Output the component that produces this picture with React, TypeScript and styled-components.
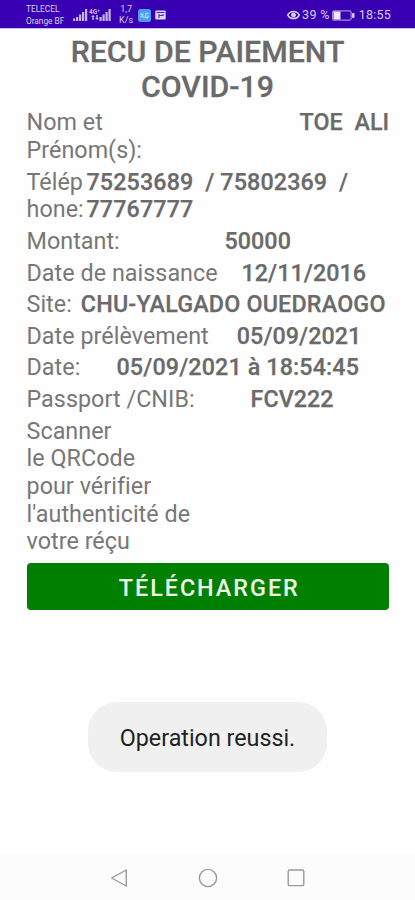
import React from "react";
import styled, { createGlobalStyle } from "styled-components";

const GlobalStyle = createGlobalStyle`
  * { box-sizing: border-box; }
  html, body { margin: 0; background: #fefefe; }
  body { font-family: Roboto, sans-serif; }
`;

const Screen = styled.div`
  width: 415px;
  height: 900px;
  display: flex;
  flex-direction: column;
  overflow: hidden;
  background: #fefefe;
`;

const StatusBar = styled.header`
  flex: none;
  height: 29px;
  padding: 0 24px 0 26px;
  display: flex;
  justify-content: space-between;
  align-items: center;
  background: #3900b3;
  border-bottom: 1px solid #c9baf0;
  color: #d8cdf5;
`;

const StatusGroup = styled.div<{ $gap: number }>`
  display: flex;
  align-items: center;
  gap: ${(p) => p.$gap}px;
  padding-top: 2px;
`;

const SignalGroup = styled.div`
  display: flex;
  align-items: center;
  gap: 1px;
`;

const Carrier = styled.div`
  width: 43px;
  font-size: 8.4px;
  line-height: 12px;
  letter-spacing: -0.05px;
  white-space: nowrap;
`;

const Speed = styled.div`
  width: 15px;
  margin-left: 2px;
  font-size: 9px;
  line-height: 11px;
  text-align: center;
`;

const StatusText = styled.span<{ $spacing?: number }>`
  font-size: 12.5px;
  line-height: 16px;
  letter-spacing: ${(p) => p.$spacing ?? 0}px;
  white-space: nowrap;
`;

const Title = styled.h1`
  flex: none;
  margin: 4.5px 0 0;
  font-size: 30.3px;
  line-height: 35.6px;
  font-weight: 500;
  text-align: center;
  color: #6a6a6a;
  -webkit-text-stroke: 0.3px #6a6a6a;
`;

const Receipt = styled.main`
  flex: none;
  padding: 4.8px 26px 0 26.5px;
  display: flex;
  flex-direction: column;
  gap: 3.9px;
  font-size: 23.3px;
  line-height: 27.7px;
`;

const Row = styled.div`
  display: flex;
  align-items: flex-start;
  white-space: pre;
`;

const Label = styled.div<{ $width?: number }>`
  flex: none;
  width: ${(p) => (p.$width ? `${p.$width}px` : "auto")};
  letter-spacing: 0.05px;
  color: #777;
`;

const Value = styled.div<{ $spacing?: number }>`
  font-weight: 500;
  letter-spacing: ${(p) => p.$spacing ?? 0.05}px;
  color: #6a6a6a;
  -webkit-text-stroke: 0.25px #6a6a6a;
`;

const DownloadButton = styled.button`
  flex: none;
  width: 362.5px;
  height: 47px;
  margin: 6.9px 0 0 26.5px;
  padding: 2px 0 0 3px;
  border: 0;
  border-radius: 4px;
  background: #008000;
  color: #eef8ea;
  font: 500 23.4px/28px Roboto, sans-serif;
  letter-spacing: 1.95px;
`;

const Toast = styled.div`
  flex: none;
  align-self: center;
  width: 239px;
  height: 70px;
  margin: 92px 0 0;
  padding-top: 2px;
  display: flex;
  align-items: center;
  justify-content: center;
  border-radius: 29px;
  background: #f0f0f0;
  color: #222;
  font-size: 23.3px;
  white-space: nowrap;
`;

const NavBar = styled.nav`
  flex: none;
  height: 45px;
  margin-top: auto;
  padding: 0 109px;
  display: flex;
  align-items: center;
  justify-content: space-between;
  background: #fcfcfc;
`;

type Entry = { label: string; value: string; width: number; valueSpacing?: number };

const entries: Entry[] = [
  { label: "Nom et\nPrénom(s):", value: "TOE  ALI", width: 273, valueSpacing: 0.05 },
  { label: "Télép\nhone:", value: "75253689  / 75802369  /\n77767777", width: 60, valueSpacing: 0.12 },
  { label: "Montant:", value: "50000", width: 198 },
  { label: "Date de naissance", value: "12/11/2016", width: 215 },
  { label: "Site:", value: "CHU-YALGADO OUEDRAOGO", width: 54.3, valueSpacing: 0.18 },
  { label: "Date prélèvement", value: "05/09/2021", width: 210.3 },
  { label: "Date:", value: "05/09/2021 à 18:54:45", width: 90, valueSpacing: 0.12 },
  { label: "Passport /CNIB:", value: "FCV222", width: 224 },
];

const Signal = () => (
  <svg width="15" height="14" viewBox="0 0 15 14" fill="#c5b6ef">
    <rect x="0" y="10.5" width="2.2" height="2.5" />
    <rect x="3" y="9" width="2.2" height="4" />
    <rect x="6" y="6.5" width="2.2" height="6.5" />
    <rect x="9" y="4" width="2.2" height="9" />
    <rect x="12" y="1" width="2.2" height="12" />
  </svg>
);

const DataSignal = () => (
  <svg width="23" height="14" viewBox="0 0 23 14" fill="#c5b6ef">
    <text x="0" y="5.5" fontFamily="Roboto" fontSize="6.5" fontWeight="700">4G⁺</text>
    <path d="M2 9l2-2 2 2H4.700v3H3.300V9z M6 10h1.300V7h1.400v3H10l-2 2z" />
    <rect x="10.500" y="9" width="2.200" height="4" />
    <rect x="13.500" y="6.500" width="2.200" height="6.500" />
    <rect x="16.500" y="4" width="2.200" height="9" />
    <rect x="19.500" y="1" width="2.200" height="12" />
  </svg>
);

const BlueApp = () => (
  <svg width="13" height="13" viewBox="0 0 13 13" fill="none">
    <rect width="13" height="13" rx="2.500" fill="#4c9cf5" />
    <path d="M2.500 4.500l3 4M5.500 4.500l-3 4M10.500 4.500H8L7 8.500h3V6.500" stroke="#a5d6fa" strokeWidth="1.300" />
  </svg>
);

const CardApp = () => (
  <svg width="11" height="10" viewBox="0 0 11 10">
    <rect x="0.300" y="0.500" width="10.400" height="9" rx="1" fill="#ded4f7" />
    <path d="M1.500 2.500h8M4 4v4M4 5.500h4V4" stroke="#4b25af" strokeWidth="1.100" fill="none" />
  </svg>
);

const Eye = () => (
  <svg width="13" height="10" viewBox="0 0 13 10" fill="none" stroke="#d8cdf5">
    <path d="M0.700 5C3.500 0.200 9.500 0.200 12.300 5 9.500 9.800 3.500 9.800 0.700 5z" strokeWidth="1.500" />
    <circle cx="6.500" cy="5" r="2" fill="#d8cdf5" />
  </svg>
);

const Battery = () => (
  <svg width="25" height="11" viewBox="0 0 25 11">
    <rect x="0.600" y="0.800" width="18.500" height="9.400" rx="1.500" fill="none" stroke="#9e87df" strokeWidth="1.200" />
    <rect x="1.500" y="1.500" width="7" height="8" fill="#eee8fc" />
    <rect x="20" y="3" width="2.500" height="5" rx="1" fill="#d8cdf5" />
  </svg>
);

export default function App() {
  return (
    <>
      <GlobalStyle />
      <Screen>
        <StatusBar>
          <StatusGroup $gap={4.3}>
            <Carrier>TELECEL<br />Orange BF</Carrier>
            <SignalGroup>
              <Signal />
              <DataSignal />
            </SignalGroup>
            <Speed>1,7<br />K/s</Speed>
            <BlueApp />
            <CardApp />
          </StatusGroup>
          <StatusGroup $gap={2}>
            <Eye />
            <StatusText $spacing={0.4}>39 %</StatusText>
            <Battery />
            <StatusText $spacing={0.2}>18:55</StatusText>
          </StatusGroup>
        </StatusBar>
        <Title>RECU DE PAIEMENT<br />COVID-19</Title>
        <Receipt>
          {entries.map((e) => (
            <Row key={e.label}>
              <Label $width={e.width}>{e.label}</Label>
              <Value $spacing={e.valueSpacing}>{e.value}</Value>
            </Row>
          ))}
          <Row>
            <Label>{"Scanner\nle QRCode\npour vérifier\nl'authenticité de\nvotre réçu"}</Label>
          </Row>
        </Receipt>
        <DownloadButton>TÉLÉCHARGER</DownloadButton>
        <Toast>Operation reussi.</Toast>
        <NavBar>
          <svg width="20" height="20" viewBox="0 0 20 20" fill="none" stroke="#999" strokeWidth="1.400" strokeLinejoin="round">
            <path d="M17.300 2v16L2.700 10z" />
          </svg>
          <svg width="20" height="20" viewBox="0 0 20 20" fill="none" stroke="#999" strokeWidth="1.400">
            <circle cx="10" cy="10" r="8.600" />
          </svg>
          <svg width="20" height="20" viewBox="0 0 20 20" fill="none" stroke="#999" strokeWidth="1.400">
            <rect x="2.200" y="2" width="15.600" height="15.600" rx="1.500" />
          </svg>
        </NavBar>
      </Screen>
    </>
  );
}
